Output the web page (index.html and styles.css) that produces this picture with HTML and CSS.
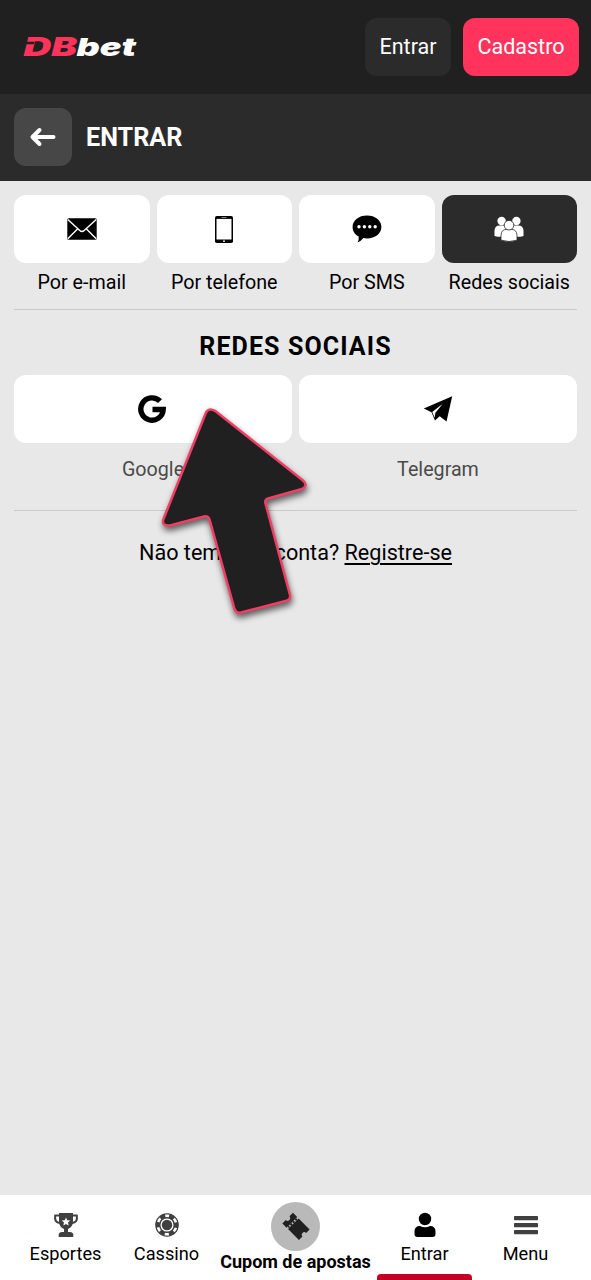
FILE: index.html
```html
<!DOCTYPE html>
<html lang="pt">
<head>
<meta charset="utf-8">
<title>DBbet – Entrar</title>
<link rel="stylesheet" href="styles.css">
</head>
<body>
<div class="app">
  <header class="topbar">
    <svg class="logo" width="126" height="50" viewBox="-6 0 126 50" role="img" aria-label="DBbet">
      <text class="logo-db" x="1.500" y="34" textLength="53.500" lengthAdjust="spacingAndGlyphs">DB</text>
      <path class="logo-cut" d="M0 19.800H12.500L11.800 22.300H0Z"/>
      <text class="logo-bet" x="54.500" y="34" textLength="59.500" lengthAdjust="spacingAndGlyphs">bet</text>
    </svg>
    <div class="actions">
      <a class="btn btn-dark">Entrar</a>
      <a class="btn btn-pink">Cadastro</a>
    </div>
  </header>

  <div class="titlebar">
    <a class="back"><svg width="28" height="20" viewBox="0 0 28 20"><path d="M24.500 10H4M10.500 3 3.500 10l7 7" fill="none" stroke="#fff" stroke-width="4" stroke-linecap="round" stroke-linejoin="round"/></svg></a>
    <h1 class="page-title">ENTRAR</h1>
  </div>

  <main class="content">
    <div class="methods">
      <div class="method">
        <div class="tile"><svg width="30" height="22" viewBox="0 0 30 22"><rect x=".3" y=".3" width="29.400" height="21.400" rx="1.500"/><path d="M.8 1.500 12.800 12.600Q15 14.600 17.200 12.600L29.200 1.500M.8 20.800 10.500 11M29.200 20.800 19.500 11" fill="none" stroke="#fff" stroke-width="1.400"/></svg></div>
        <span class="label">Por e-mail</span>
      </div>
      <div class="method">
        <div class="tile"><svg width="18" height="27" viewBox="0 0 18 27"><rect width="18" height="27" rx="1.800"/><rect x="1.500" y="2.900" width="15" height="20.600" fill="#fff"/><path d="M6.500 1.500h5" stroke="#aaa" stroke-width=".8"/><circle cx="9" cy="25.200" r=".9" fill="#fff"/></svg></div>
        <span class="label">Por telefone</span>
      </div>
      <div class="method">
        <div class="tile"><svg width="30" height="28" viewBox="0 0 30 28"><path d="M15 .6C23.200.6 29.400 5.500 29.400 12S23.200 23.400 15 23.400q-2 0-3.600-.3Q9 26.300 5.500 27.500q1.600-3 1.200-6C2.800 19.500.6 16 .6 12 .6 5.500 6.800.6 15 .6Z"/><g fill="#fff"><circle cx="7" cy="11.800" r="1.700"/><circle cx="12.400" cy="11.800" r="1.700"/><circle cx="17.800" cy="11.800" r="1.700"/><circle cx="23.200" cy="11.800" r="1.700"/></g></svg></div>
        <span class="label">Por SMS</span>
      </div>
      <div class="method">
        <div class="tile tile-active"><svg width="30" height="26" viewBox="0 0 30 26" fill="#fff"><circle cx="7.600" cy="5" r="4.200"/><circle cx="22.400" cy="5" r="4.200"/><path d="M.5 20v-5.500Q1 9.500 5.500 9.500h4q4 0 4 6V20q-7 1.700-13 0ZM29.500 20v-5.500q-.5-5-5-5h-4q-4 0-4 6V20q7 1.700 13 0Z"/><g stroke="#2b2b2b" stroke-width=".8"><path d="M7 24.200v-5q.4-5.800 5.500-5.800h5q5.100 0 5.500 5.800v5q-8 2.600-16 0Z"/><circle cx="15" cy="9.200" r="4.800"/></g></svg></div>
        <span class="label">Redes sociais</span>
      </div>
    </div>

    <section class="social">
      <h2 class="section-title">REDES SOCIAIS</h2>
      <div class="networks">
        <div class="network">
          <div class="tile"><svg class="g-mark" width="30" height="30" viewBox="0 0 30 30"><path d="M23 7.200A11.200 11.200 0 1 0 26.200 15.500H15.500" fill="none" stroke="#000" stroke-width="5.400"/></svg></div>
          <span class="label label-muted">Google</span>
        </div>
        <div class="network">
          <div class="tile"><svg width="30" height="26" viewBox="0 0 30 26"><path d="M.8 12.600 29.200.3 23.500 25.400 16.700 20.300 12 24.500 8.500 16.200Z"/><path d="m9.200 16 10.600-8.300-7.400 9-.7 5Z" fill="#fff"/></svg></div>
          <span class="label label-muted">Telegram</span>
        </div>
      </div>
    </section>

    <p class="signup">Não tem uma conta? <a class="signup-link">Registre-se</a></p>
  </main>

  <nav class="tabs">
    <div class="tab">
      <svg width="26" height="26" viewBox="0 0 26 26" fill="#404040"><path d="M6 1h14v8q0 6-5 8v3h2q3 0 3.300 2.500V25H5.700v-2.500Q6 20 9 20h2v-3q-5-2-5-8Z"/><path d="M6 3.600H2.200Q1 10.500 7 11M20 3.600h3.800Q25 10.500 19 11" fill="none" stroke="#404040" stroke-width="2"/><path d="m13 5.600 1.200 2.700 3 .3-2.200 2 .7 3L13 12l-2.700 1.600.7-3-2.200-2 3-.3Z" fill="#fff"/></svg>
      <span>Esportes</span>
    </div>
    <div class="tab">
      <svg width="26" height="26" viewBox="0 0 26 26"><circle cx="13" cy="13" r="11.800" fill="#404040"/><circle cx="13" cy="13" r="9.300" fill="none" stroke="#fff" stroke-width="2.600" stroke-dasharray="4.200 5.540" stroke-dashoffset="2.100" transform="rotate(-90 13 13)"/><circle cx="13" cy="13" r="5.900" fill="none" stroke="#fff" stroke-width="1.300"/></svg>
      <span>Cassino</span>
    </div>
    <div class="tab tab-coupon">
      <div class="coupon"><svg width="30" height="30" viewBox="0 0 30 30"><g transform="translate(15.500 15) rotate(45)" fill="#202020"><path d="M-12.500-7.500H-6.500V7.500H-12.500V2.600A2.600 2.600 0 0 0-12.500-2.600Z"/><path d="M-4.500-7.500H11V-2.600A2.600 2.600 0 0 0 11 2.600V7.500H-4.500Z"/><path d="M-5.500-6v12" stroke="#202020" stroke-width="2" stroke-dasharray="2 1.500"/></g></svg></div>
      <span>Cupom de apostas</span>
    </div>
    <div class="tab tab-active">
      <svg width="26" height="26" viewBox="0 0 26 26"><circle cx="13" cy="7" r="6.200"/><path d="M2.500 22v-2.500q0-5.500 5.500-5.500Q13 16.700 18 14q5.500 0 5.500 5.500V22q0 3-3 3h-15q-3 0-3-3Z"/></svg>
      <span>Entrar</span>
    </div>
    <div class="tab">
      <svg width="26" height="26" viewBox="0 0 26 26" fill="#404040"><rect x="1" y="4" width="24" height="4.200" rx=".7"/><rect x="1" y="11" width="24" height="4.200" rx=".7"/><rect x="1" y="18" width="24" height="4.200" rx=".7"/></svg>
      <span>Menu</span>
    </div>
  </nav>

  <svg class="pointer" width="180" height="240" viewBox="150 395 180 240"><path d="M206 412.500Q209 407.500 215 410.800L303 480.500Q308.500 485.500 302 489L268 498.500Q264.500 499.500 265.500 503.500L290 595Q291 599.500 286.500 600.800L241 612.500Q236 613.500 234.500 609L209.500 519.500Q208 515.500 204 516.500L170 525.500Q161 526 163.500 519Z"/></svg>
</div>
</body>
</html>
```

FILE: styles.css
```css
* { box-sizing: border-box; }

body {
  margin: 0;
  background: #e8e8e8;
  color: #000;
  font-family: Roboto, "Liberation Sans", sans-serif;
}

svg { display: block; }

.app {
  position: relative;
  display: flex;
  flex-direction: column;
  height: 1280px;
  overflow: hidden;
}

.topbar {
  display: flex;
  align-items: center;
  justify-content: space-between;
  height: 94px;
  padding: 0 12px 0 16px;
  background: #202020;
}

.logo { overflow: visible; }
.logo-db, .logo-bet {
  font-family: Inter, sans-serif;
  font-style: italic;
  font-weight: 900;
}
.logo-db { font-size: 25.500px; fill: #ff335c; }
.logo-bet { font-size: 25px; fill: #fff; }
.logo-cut { fill: #202020; }

.actions { display: flex; gap: 12px; }

.btn {
  display: flex;
  align-items: center;
  justify-content: center;
  height: 58px;
  padding-bottom: 2px;
  border-radius: 12px;
  color: #fff;
  font-size: 21.500px;
}
.btn-dark { width: 86px; background: #2b2b2b; }
.btn-pink { width: 116px; background: #ff335c; }

.titlebar {
  display: flex;
  align-items: center;
  gap: 14px;
  height: 86.500px;
  padding: 0 14px;
  background: #2b2b2b;
}
.back {
  display: flex;
  align-items: center;
  justify-content: center;
  width: 58px;
  height: 58px;
  border-radius: 12px;
  background: #474747;
}
.page-title {
  margin: 0;
  color: #fff;
  font-size: 25.200px;
  font-weight: 700;
}

.content { flex: 1; padding: 14.500px 14px 0; }

.methods {
  display: grid;
  grid-template-columns: repeat(4, 1fr);
  gap: 7px;
  height: 115px;
  border-bottom: 1.500px solid #c9c9c9;
}
.method, .network {
  display: flex;
  flex-direction: column;
  align-items: center;
  min-width: 0;
}
.tile {
  display: flex;
  align-items: center;
  justify-content: center;
  width: 100%;
  height: 68px;
  border-radius: 12px;
  background: #fff;
}
.tile-active { background: #2b2b2b; }
.g-mark { margin-right: 2px; }
.label {
  margin-top: 8px;
  font-size: 19.700px;
  line-height: 24px;
  white-space: nowrap;
}
.label-muted { margin-top: 15px; color: #4a4a4a; }

.social { height: 201px; border-bottom: 1.500px solid #c9c9c9; }
.section-title {
  margin: 0;
  padding-top: 20.500px;
  font-size: 25px;
  line-height: 32px;
  font-weight: 700;
  letter-spacing: 1.100px;
  text-align: center;
}
.networks {
  display: grid;
  grid-template-columns: 1fr 1fr;
  gap: 7px;
  margin-top: 12.500px;
}

.signup {
  margin: 28px 0 0;
  font-size: 21.600px;
  line-height: 28px;
  text-align: center;
}
.signup-link {
  text-decoration: underline;
  text-decoration-thickness: 1.500px;
  text-underline-offset: 2.500px;
}

.tabs {
  display: grid;
  grid-template-columns: 101px 101px 157px 101px 101px;
  height: 85px;
  padding: 0 15px;
  background: #fff;
}
.tab {
  display: flex;
  flex-direction: column;
  align-items: center;
  gap: 4px;
  padding-top: 17px;
  font-size: 18.200px;
  line-height: 24px;
  white-space: nowrap;
}
.tab-coupon {
  gap: 0;
  padding-top: 7px;
  font-size: 18px;
  line-height: 22px;
  font-weight: 700;
}
.coupon {
  display: flex;
  align-items: center;
  justify-content: center;
  width: 49px;
  height: 49px;
  border-radius: 50%;
  background: #b9b9b9;
}
.tab-active::after {
  content: "";
  width: 95px;
  height: 6px;
  margin-top: 4px;
  border-radius: 4px 4px 0 0;
  background: #c60025;
}

/* Hint arrow floating over the form */
.pointer {
  position: absolute;
  left: 150px;
  top: 395px;
  fill: #202020;
  stroke: #f23d65;
  stroke-width: 2.500px;
  filter: drop-shadow(1px 4px 3px rgba(0, 0, 0, .6));
}
```
